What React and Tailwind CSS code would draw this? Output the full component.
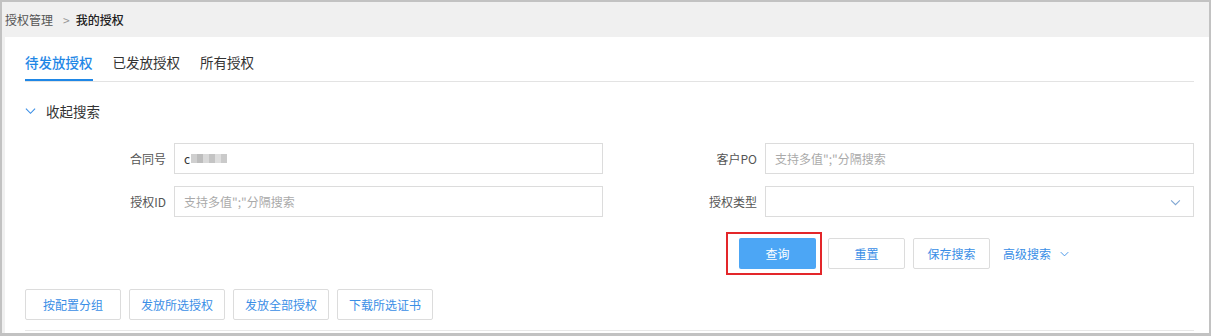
import React from 'react';

const FONT = "font-['Microsoft_YaHei','Noto_Sans_CJK_SC','Noto_Sans',sans-serif]";

const Chevron = ({ className }) => (
    <svg className={className} viewBox="0 0 12 8" fill="none" stroke="currentColor" strokeWidth="1.2">
        <path d="M1 1.5l5 5 5-5" />
    </svg>
);

const Field = ({ label, children }) => (
    <div className="flex items-center">
        <div className="w-[149px] pr-[8px] text-right text-[12px] text-[#555]">{label}</div>
        <div className="w-[429px] h-[31px] border border-[#dcdcdc] flex items-center px-[9px] text-[12px] relative">
            {children}
        </div>
    </div>
);

const Placeholder = () => <span className="text-[#aaa]">支持多值";"分隔搜索</span>;

const App = () => {
    const mosaic = ['#cfcfcf', '#bdbdbd', '#d9d9d9', '#c4c4c4', '#dedede', '#cacaca'];
    return (
        <div className={`w-[1211px] h-[336px] overflow-hidden border-t-2 border-l-2 border-r-2 border-b-[3px] border-[#c2c2c2] bg-[#f0f0f0] flex flex-col ${FONT}`}>
            {/* breadcrumb */}
            <div className="h-[35px] shrink-0 flex items-center pl-[3px] text-[12px]">
                <span className="text-[#555]">授权管理</span>
                <span className="ml-[10px] mr-[6px] text-[#999]">&gt;</span>
                <span className="text-[#222] font-medium">我的授权</span>
            </div>

            <div className="ml-[3px] flex-1 bg-white pl-[20px] pr-[15px]">
                {/* tabs */}
                <div className="flex gap-[20px] border-b border-[#e3e3e3]">
                    <div className="pt-[15px] pb-[7px] border-b-2 border-[#1f87e6] text-[13.5px] leading-[20px] text-[#1f87e6] font-medium">待发放授权</div>
                    <div className="pt-[15px] pb-[7px] border-b-2 border-transparent text-[13.5px] leading-[20px] text-[#333]">已发放授权</div>
                    <div className="pt-[15px] pb-[7px] border-b-2 border-transparent text-[13.5px] leading-[20px] text-[#333]">所有授权</div>
                </div>

                {/* collapse toggle */}
                <div className="mt-[19px] h-[20px] flex items-center text-[13.5px] text-[#333]">
                    <Chevron className="w-[11px] h-[8px] text-[#3a8ee6]" />
                    <span className="ml-[10px]">收起搜索</span>
                </div>

                {/* search form */}
                <div className="mt-[22px] grid grid-cols-[578px_578px] gap-x-[13px] gap-y-[12px]">
                    <Field label="合同号">
                        <span className="text-[#333]">c</span>
                        <span className="ml-[1px] flex">
                            {mosaic.map((c, i) => (
                                <span key={i} className="w-[6px] h-[9px]" style={{ background: c }} />
                            ))}
                        </span>
                    </Field>
                    <Field label="客户PO"><Placeholder /></Field>
                    <Field label="授权ID"><Placeholder /></Field>
                    <Field label="授权类型">
                        <Chevron className="absolute right-[12px] top-[12px] w-[11px] h-[7px] text-[#7fa6d3]" />
                    </Field>
                </div>

                {/* action buttons */}
                <div className="mt-[21px] flex items-center pl-[714px] text-[12px]">
                    <div className="relative">
                        <button className="w-[77px] h-[31px] rounded-[2px] bg-[#4ca6f5] text-white">查询</button>
                        <div className="absolute -left-[13px] -top-[6px] -right-[6px] -bottom-[6px] border-2 border-[#e3262a] pointer-events-none" />
                    </div>
                    <button className="ml-[12px] w-[77px] h-[31px] border border-[#dcdcdc] rounded-[2px] bg-white text-[#3a8ee6]">重置</button>
                    <button className="ml-[8px] w-[77px] h-[31px] border border-[#dcdcdc] rounded-[2px] bg-white text-[#3a8ee6]">保存搜索</button>
                    <span className="ml-[13px] text-[#3a8ee6]">高级搜索</span>
                    <Chevron className="ml-[9px] w-[9px] h-[6px] text-[#3a8ee6]" />
                </div>

                {/* bulk buttons */}
                <div className="mt-[20px] flex gap-[8px] text-[12px]">
                    {['按配置分组', '发放所选授权', '发放全部授权', '下载所选证书'].map(t => (
                        <button key={t} className="w-[96px] h-[31px] border border-[#dcdcdc] rounded-[2px] bg-white text-[#3a8ee6]">{t}</button>
                    ))}
                </div>

                <div className="mt-[10px] border-t border-[#e8e8e8]" />
            </div>
        </div>
    );
};

export default App;
